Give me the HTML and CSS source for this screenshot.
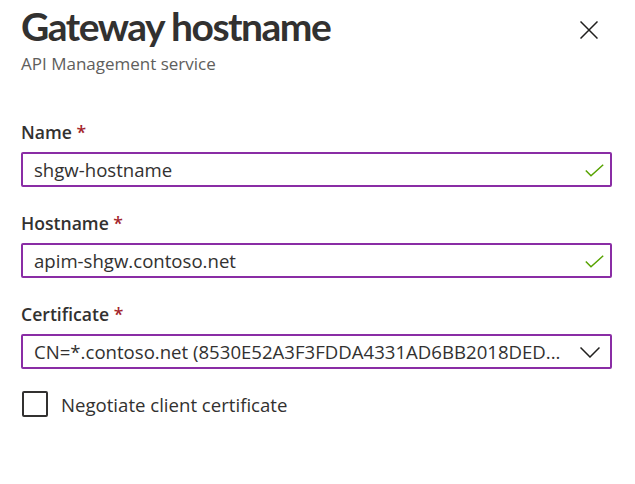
FILE: index.html
```html
<!DOCTYPE html>
<html lang="en">
<head>
<meta charset="utf-8">
<link rel="stylesheet" href="styles.css">
</head>
<body>
<div class="panel">
  <div class="header">
    <div class="titles">
      <h1 class="title">Gateway hostname</h1>
      <div class="subtitle">API Management service</div>
    </div>
    <button class="close" aria-label="Close">
      <svg width="18" height="18" viewBox="0 0 18 18"><path d="M0.5 0.5L17.5 17.5M17.5 0.5L0.5 17.5" stroke="#201f1e" stroke-width="1.5" fill="none"/></svg>
    </button>
  </div>
  <div class="form">
    <div class="field">
      <label class="label">Name <span class="req">*</span></label>
      <div class="input">
        <span class="value">shgw-hostname</span>
        <svg class="check" width="19" height="13" viewBox="0 0 19 13"><path d="M0.8 6.5L6 11.7L18.2 0.8" stroke="#57a300" stroke-width="1.5" fill="none"/></svg>
      </div>
    </div>
    <div class="field">
      <label class="label">Hostname <span class="req">*</span></label>
      <div class="input">
        <span class="value">apim-shgw.contoso.net</span>
        <svg class="check" width="19" height="13" viewBox="0 0 19 13"><path d="M0.8 6.5L6 11.7L18.2 0.8" stroke="#57a300" stroke-width="1.5" fill="none"/></svg>
      </div>
    </div>
    <div class="field">
      <label class="label">Certificate <span class="req">*</span></label>
      <div class="input">
        <span class="value">CN=*.contoso.net (8530E52A3F3FDDA4331AD6BB2018DED...</span>
        <svg class="chev" width="20" height="11" viewBox="0 0 20 11"><path d="M0.5 0.5L10 10L19.5 0.5" stroke="#201f1e" stroke-width="1.5" fill="none"/></svg>
      </div>
    </div>
    <label class="checkrow">
      <span class="box"></span>
      <span class="checktext">Negotiate client certificate</span>
    </label>
  </div>
</div>
</body>
</html>
```
FILE: styles.css
```css
html, body {
  margin: 0;
  padding: 0;
  background: #ffffff;
}
body {
  font-family: "Open Sans", "Noto Sans", sans-serif;
  color: #323130;
  width: 635px;
  height: 484px;
  overflow: hidden;
}
.panel {
  padding: 0 23px 0 21px;
}
.header {
  display: flex;
  justify-content: space-between;
  align-items: flex-start;
}
.title {
  margin: 0;
  font-family: "Lato", "Open Sans", sans-serif;
  font-size: 39px;
  font-weight: 700;
  line-height: 52px;
  letter-spacing: -1.5px;
  color: #323130;
}
.subtitle {
  font-size: 17px;
  line-height: 22px;
  margin-top: 1px;
  color: #605e5c;
}
.close {
  border: none;
  background: none;
  padding: 0;
  margin: 21px 14px 0 0;
  width: 18px;
  height: 18px;
  display: flex;
  cursor: pointer;
}
.form {
  display: flex;
  flex-direction: column;
  margin-top: 45px;
  gap: 24px;
}
.field {
  display: flex;
  flex-direction: column;
  gap: 8px;
}
.label {
  font-size: 17.6px;
  font-weight: 600;
  line-height: 24px;
  color: #323130;
}
.req {
  color: #a4262c;
}
.input {
  box-sizing: border-box;
  height: 35px;
  border: 2px solid #8a2da5;
  border-radius: 2px;
  display: flex;
  align-items: center;
  justify-content: space-between;
  padding: 0 6px 0 11px;
}
.value {
  font-size: 18.6px;
  color: #323130;
  white-space: nowrap;
}
.check {
  margin-top: 1px;
}
.chev {
  margin-right: 4px;
  margin-top: 1px;
}
.checkrow {
  display: flex;
  align-items: center;
  gap: 13px;
  margin-top: -2px;
  margin-left: 1px;
}
.box {
  box-sizing: border-box;
  width: 26px;
  height: 26px;
  border: 2px solid #323130;
  border-radius: 2px;
}
.checktext {
  font-size: 18.6px;
  color: #323130;
}
```
